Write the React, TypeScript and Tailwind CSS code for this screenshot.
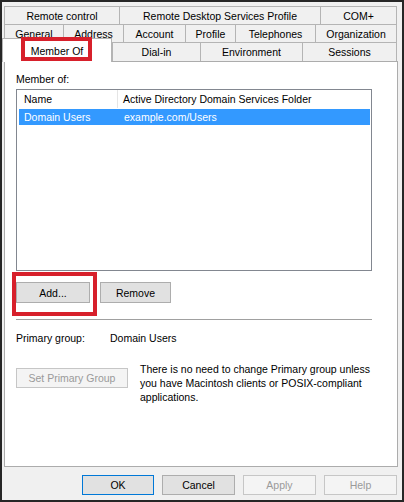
import React from "react";

function Tab({ w, label, last }: { w: string; label: string; last?: boolean }) {
  return (
    <div
      className={`${w} h-full flex items-center justify-center border-l border-t border-[#b4b4b4] bg-[#f0f0f0] whitespace-nowrap ${
        last ? "border-r" : ""
      }`}
    >
      {label}
    </div>
  );
}

function Btn({
  w,
  label,
  variant = "normal",
}: {
  w: string;
  label: string;
  variant?: "normal" | "default" | "disabled";
}) {
  const cls =
    variant === "default"
      ? "border-[#0078d7] bg-[#e1e1e1] text-black"
      : variant === "disabled"
      ? "border-[#c6c6c6] bg-[#f4f4f4] text-[#9a9a9a]"
      : "border-[#adadad] bg-[#e1e1e1] text-black";
  return (
    <div className={`${w} h-[20px] border flex items-center justify-center ${cls}`}>{label}</div>
  );
}

export default function App() {
  return (
    <div className="w-[404px] h-[502px] border-2 border-[#262626] bg-[#f0f0f0] text-[10.5px] leading-[14px] text-black font-['Liberation_Sans',Arial,sans-serif] flex flex-col overflow-hidden">
      {/* Tabs */}
      <div className="pt-[4px] pl-[2px] flex flex-col">
        <div className="flex h-[18px]">
          <Tab w="w-[115px]" label="Remote control" />
          <Tab w="w-[201px]" label="Remote Desktop Services Profile" />
          <Tab w="w-[77px]" label="COM+" last />
        </div>
        <div className="flex h-[18px]">
          <Tab w="w-[59px]" label="General" />
          <Tab w="w-[60px]" label="Address" />
          <Tab w="w-[62px]" label="Account" />
          <Tab w="w-[50px]" label="Profile" />
          <Tab w="w-[80px]" label="Telephones" />
          <Tab w="w-[82px]" label="Organization" last />
        </div>
        <div className="flex items-end -mt-[4px]">
          <div className="relative z-10 -ml-[2px] -mb-px w-[110px] h-[24px] bg-white border-l border-t border-r border-[#b4b4b4] flex items-center justify-center">
            Member Of
            <div className="absolute left-[18px] top-[-2px] w-[71px] h-[24px] border-[4px] border-[#d7202b]" />
          </div>
          <div className="h-[19px] flex">
            <Tab w="w-[88px]" label="Dial-in" />
            <Tab w="w-[102px]" label="Environment" />
            <Tab w="w-[95px]" label="Sessions" last />
          </div>
        </div>
      </div>

      {/* Panel */}
      <div className="ml-[2px] w-[394px] h-[406px] border border-[#acacac] bg-white px-[11px] pt-[10px] flex flex-col">
        <div>Member of:</div>
        <div className="mt-[3px] w-[356px] h-[182px] border border-[#828790] bg-white flex flex-col">
          <div className="h-[18px] flex items-center">
            <div className="w-[101px] h-full pl-[7px] flex items-center border-r border-[#e5e5e5]">Name</div>
            <div className="pl-[5px]">Active Directory Domain Services Folder</div>
          </div>
          <div className="mt-px ml-[2px] mr-[1px] h-[16px] bg-[#3399ff] text-white flex items-center">
            <div className="w-[105px] pl-[5px]">Domain Users</div>
            <div>example.com/Users</div>
          </div>
        </div>

        <div className="mt-[11px] flex">
          <div className="relative">
            <div className="w-[74px] h-[21px] border border-[#adadad] bg-[#e1e1e1] flex items-center justify-center">
              Add...
            </div>
            <div className="absolute left-[-4px] top-[-10px] w-[85px] h-[44px] border-[4px] border-[#d7202b]" />
          </div>
          <div className="ml-[10px] w-[71px] h-[21px] border border-[#adadad] bg-[#e1e1e1] flex items-center justify-center">
            Remove
          </div>
        </div>

        <div className="mt-[16px] w-[356px] h-px bg-[#a0a0a0]" />

        <div className="mt-[11px] flex">
          <div className="w-[94px]">Primary group:</div>
          <div>Domain Users</div>
        </div>

        <div className="mt-[17px] flex items-start">
          <div className="mt-[6px] w-[112px] h-[20px] border border-[#c6c6c6] bg-[#f4f4f4] text-[#9a9a9a] flex items-center justify-center">
            Set Primary Group
          </div>
          <div className="ml-[12px] whitespace-nowrap">
            There is no need to change Primary group unless
            <br />
            you have Macintosh clients or POSIX-compliant
            <br />
            applications.
          </div>
        </div>
      </div>

      {/* Bottom buttons */}
      <div className="mt-[8px] pr-[5px] flex justify-end gap-[8px]">
        <Btn w="w-[72px]" label="OK" variant="default" />
        <Btn w="w-[73px]" label="Cancel" />
        <Btn w="w-[73px]" label="Apply" variant="disabled" />
        <Btn w="w-[73px]" label="Help" variant="disabled" />
      </div>
    </div>
  );
}
